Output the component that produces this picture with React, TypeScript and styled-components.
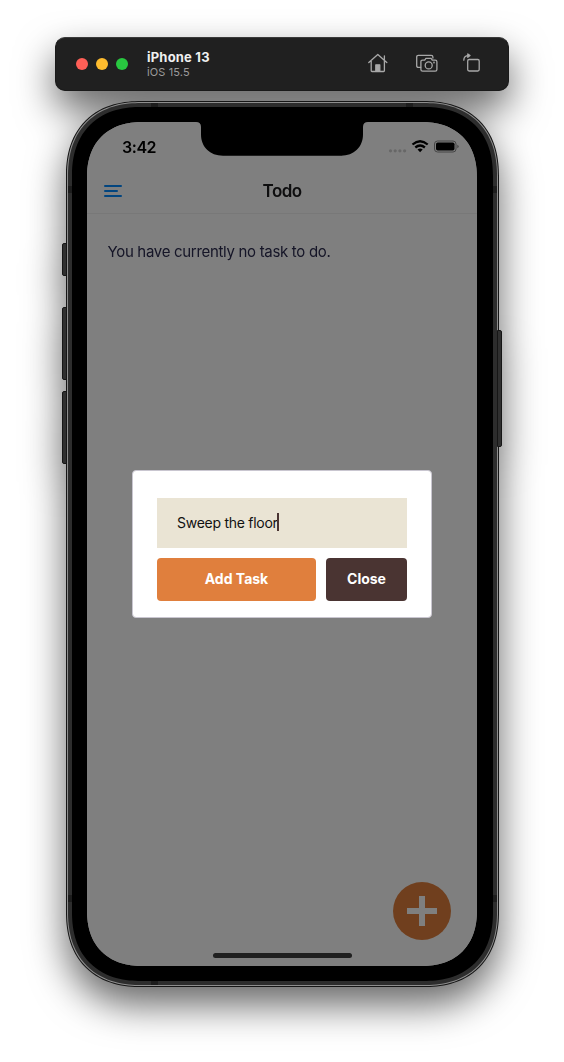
import React from "react";
import styled, { createGlobalStyle, css } from "styled-components";

const Global = createGlobalStyle`
  * { box-sizing: border-box; }
  body { margin: 0; background: #fff; font-family: Inter, "Liberation Sans", sans-serif; -webkit-font-smoothing: antialiased; }
`;

/* Continuous device corners, with plain rounding where corner-shape is missing. */
const corner = (radius: number) => css`
  border-radius: ${radius * 0.9}px;
  @supports (corner-shape: superellipse(1.2)) {
    border-radius: ${radius}px;
    corner-shape: superellipse(1.2);
  }
`;

const Desktop = styled.main`
  height: 1062px;
  padding: 37px 0 0 55px;
  overflow: hidden;
`;

const Simulator = styled.div`
  width: 454px;
  filter: drop-shadow(0 18px 19px rgba(0, 0, 0, 0.6));
`;

const TitleBar = styled.header`
  height: 54px;
  display: flex;
  align-items: center;
  padding: 0 27px 0 20px;
  border-radius: 10px;
  background: #202020;
  border: 1px solid #1a1a1a;
  border-top-color: #3a3a3a;
`;

const Lights = styled.div`
  display: flex;
  gap: 8px;
  margin-right: 19px;
`;

const Light = styled.span<{ $color: string }>`
  width: 12px;
  height: 12px;
  border-radius: 50%;
  background: ${(p) => p.$color};
`;

const DeviceInfo = styled.div`
  flex: 1;
  display: flex;
  flex-direction: column;
`;

const DeviceName = styled.span`
  font-size: 13px;
  line-height: 15px;
  font-weight: 700;
  letter-spacing: 0.2px;
  color: #f0f0f0;
`;

const DeviceOs = styled.span`
  font-size: 11px;
  line-height: 14px;
  letter-spacing: 0.12px;
  color: #9c9c9c;
`;

const ToolIcon = styled.svg<{ $gap?: number }>`
  display: block;
  margin: 0 0 2px ${(p) => p.$gap ?? 0}px;
  fill: none;
  stroke: #a8a8a8;
  stroke-width: 1.3;
  stroke-linejoin: round;
  stroke-linecap: round;
`;

const Phone = styled.section`
  position: relative;
  width: 433px;
  height: 886px;
  margin: 10px 0 0 11px;
  padding: 1px;
  ${corner(75)}
  background: #161616;
`;

const Rim = styled.div`
  height: 884px;
  padding: 1px;
  ${corner(74)}
  background: #8e8e8e;
`;

const Band = styled.div`
  position: relative;
  height: 882px;
  padding: 4px;
  ${corner(73)}
  background: #2d2d2d;
`;

const Bezel = styled.div`
  position: relative;
  height: 874px;
  padding: 15px 16px 15px 15px;
  ${corner(69)}
  background: #000;
`;

const SideButton = styled.span<{ $top: number; $height: number; $right?: boolean }>`
  position: absolute;
  top: ${(p) => p.$top}px;
  height: ${(p) => p.$height}px;
  width: 5px;
  ${(p) => (p.$right ? "right: -3px; border-radius: 0 2px 2px 0;" : "left: -4px; border-radius: 2px 0 0 2px;")}
  background: #303030;
  border: 1px solid #161616;
`;

const Antenna = styled.span<{ $x: number; $y: number; $tall?: boolean }>`
  position: absolute;
  left: ${(p) => p.$x}px;
  top: ${(p) => p.$y}px;
  width: ${(p) => (p.$tall ? 4 : 7)}px;
  height: ${(p) => (p.$tall ? 7 : 4)}px;
  background: #1d1d1d;
`;

const Screen = styled.div`
  position: relative;
  width: 390px;
  height: 844px;
  ${corner(56)}
  overflow: hidden;
  background: #fff;
`;

const StatusBar = styled.div`
  height: 47px;
  display: flex;
  justify-content: space-between;
  padding: 15px 18px 0 35px;
`;

const Clock = styled.span`
  font-size: 16px;
  line-height: 20px;
  font-weight: 600;
  letter-spacing: -0.45px;
  color: #000;
`;

const StatusIcons = styled.svg`
  display: block;
  margin-top: 1px;
`;

const Notch = styled.svg`
  position: absolute;
  top: 0;
  left: 109px;
`;

const NavBar = styled.nav`
  height: 45px;
  display: grid;
  grid-template-columns: 60px 1fr 60px;
  align-items: center;
  border-bottom: 1px solid #f1f1f1;
`;

const MenuIcon = styled.svg`
  display: block;
  margin-left: 17px;
`;

const Title = styled.h1`
  margin: 0;
  text-align: center;
  font-size: 17px;
  line-height: 22px;
  font-weight: 600;
  letter-spacing: -0.6px;
  color: #1c1c1e;
`;

const Empty = styled.p`
  margin: 26px 0 0 20.5px;
  font-size: 15px;
  line-height: 24px;
  letter-spacing: -0.31px;
  color: #2c2c50;
  white-space: nowrap;
`;

const Fab = styled.button`
  position: absolute;
  right: 26px;
  bottom: 26px;
  width: 58px;
  height: 58px;
  padding: 0;
  border: 0;
  border-radius: 50%;
  background: #e07f3d;
`;

const Overlay = styled.div`
  position: absolute;
  inset: 0;
  display: flex;
  align-items: center;
  justify-content: center;
  background: rgba(0, 0, 0, 0.5);
`;

const Dialog = styled.div`
  width: 300px;
  height: 148px;
  padding: 27px 24px 16px;
  border: 1px solid #c9c6d0;
  border-radius: 4px;
  background: #fff;
`;

const Field = styled.div`
  height: 50px;
  display: flex;
  align-items: center;
  padding: 0 0 2px 20px;
  background: #eae4d4;
  font-size: 14px;
  letter-spacing: -0.27px;
  color: #111;
`;

const Caret = styled.i`
  width: 2px;
  height: 18px;
  margin-left: -1px;
  background: #4a3432;
`;

const Actions = styled.div`
  display: flex;
  gap: 10px;
  margin-top: 10px;
`;

const Button = styled.button<{ $width: number; $color: string }>`
  width: ${(p) => p.$width}px;
  height: 43px;
  padding: 0 0 2px;
  border: 0;
  border-radius: 4px;
  background: ${(p) => p.$color};
  color: #fff;
  font: 700 14px/20px Inter, "Liberation Sans", sans-serif;
`;

const HomeIndicator = styled.span`
  position: absolute;
  left: 125.5px;
  bottom: 8px;
  width: 139px;
  height: 5px;
  border-radius: 3px;
  background: #202020;
`;

export default function App() {
  return (
    <Desktop>
      <Global />
      <Simulator>
        <TitleBar>
          <Lights>
            <Light $color="#ff5f57" />
            <Light $color="#febc2e" />
            <Light $color="#28c840" />
          </Lights>
          <DeviceInfo>
            <DeviceName>iPhone 13</DeviceName>
            <DeviceOs>iOS 15.5</DeviceOs>
          </DeviceInfo>
          <ToolIcon width="20" height="20" viewBox="0 0 20 20">
            <path d="M.8 9.6 9.8 1.4l9 8.2M3.2 8v9.7q0 .8.8.8h11.6q.8 0 .8-.8V8M16.4 7V3" />
            <path d="M7.8 18v-6.2h4V18z" fill="#a8a8a8" />
          </ToolIcon>
          <ToolIcon $gap={28} width="22" height="20" viewBox="0 0 22 20">
            <path d="M4.6 14.4H2.4Q.7 14.4.7 12.7V4Q.7 2.3 2.4 2.3h12.8q1.7 0 1.7 1.7v1" />
            <path d="M6.6 7.1h2.1l1.2-1.7h5.2l1.2 1.7h2.9q1.7 0 1.7 1.7v7.6q0 1.7-1.7 1.7H6.6q-1.7 0-1.7-1.7V8.8q0-1.7 1.7-1.7z" />
            <circle cx="12.7" cy="12.4" r="3.5" />
            <circle cx="18" cy="9.5" r=".3" />
          </ToolIcon>
          <ToolIcon $gap={25} width="18" height="20" viewBox="0 0 18 20">
            <rect x="4.7" y="6.5" width="11.5" height="11.5" rx="1.4" />
            <path d="M.8 7.2Q.8 2.6 5.6 2.6" />
            <path d="M4.8.9 7 2.6 4.8 4.3z" fill="#a8a8a8" />
          </ToolIcon>
        </TitleBar>
        <Phone>
          <SideButton $top={141.5} $height={33} />
          <SideButton $top={206} $height={72.5} />
          <SideButton $top={290} $height={72.5} />
          <SideButton $right $top={229} $height={117} />
          <Rim>
            <Band>
              <Antenna $x={83} $y={0} />
              <Antenna $x={338} $y={0} />
              <Antenna $x={83} $y={878} />
              <Antenna $x={0} $y={83} $tall />
              <Antenna $x={425} $y={83} $tall />
              <Antenna $x={0} $y={792} $tall />
              <Antenna $x={425} $y={792} $tall />
              <Bezel>
                <Screen>
                  <StatusBar>
                    <Clock>3:42</Clock>
                    <StatusIcons width="72" height="20" viewBox="0 0 72 20">
                      <g fill="#cfcfcf">
                        <circle cx="3.5" cy="12.8" r="1.6" />
                        <circle cx="8.2" cy="12.8" r="1.6" />
                        <circle cx="12.9" cy="12.8" r="1.6" />
                        <circle cx="17.6" cy="12.8" r="1.6" />
                      </g>
                      <g fill="none" stroke="#000" strokeWidth="2.3">
                        <path d="M25.5 6.5q7.6-6.6 15.2 0" />
                        <path d="M28.3 9.5q4.8-4 9.6 0" />
                      </g>
                      <path d="M33.1 14.2 30.5 11.6q2.6-2 5.2 0z" />
                      <rect x="47.5" y="3" width="21.5" height="11" rx="3" fill="none" stroke="#8a8a8a" />
                      <rect x="49" y="4.5" width="18.5" height="8" rx="1.7" />
                      <path d="M70.3 6.7q1.4.5 1.4 1.8t-1.4 1.8z" fill="#8a8a8a" />
                    </StatusIcons>
                  </StatusBar>
                  <NavBar>
                    <MenuIcon width="20" height="14" viewBox="0 0 20 14" fill="none" stroke="#058aff" strokeWidth="2" strokeLinecap="round">
                      <path d="M1 2h16M1 7h12M1 12h16" />
                    </MenuIcon>
                    <Title>Todo</Title>
                  </NavBar>
                  <Empty>You have currently no task to do.</Empty>
                  <Fab aria-label="Add">
                    <svg width="58" height="58" viewBox="0 0 58 58" fill="none" stroke="#fff" strokeWidth="6">
                      <path d="M14 29h30M29 14v30" />
                    </svg>
                  </Fab>
                  <Overlay>
                    <Dialog>
                      <Field>
                        <span>Sweep the floor</span>
                        <Caret />
                      </Field>
                      <Actions>
                        <Button $width={159} $color="#e07f3d">Add Task</Button>
                        <Button $width={81} $color="#4a3432">Close</Button>
                      </Actions>
                    </Dialog>
                  </Overlay>
                  <Notch width="172" height="34" viewBox="0 0 172 34">
                    <path d="M0 0Q5 0 5 5V12.5C5 25 14 33.7 27 33.7H145C158 33.7 167 25 167 12.5V5Q167 0 172 0z" />
                  </Notch>
                  <HomeIndicator />
                </Screen>
              </Bezel>
            </Band>
          </Rim>
        </Phone>
      </Simulator>
    </Desktop>
  );
}
